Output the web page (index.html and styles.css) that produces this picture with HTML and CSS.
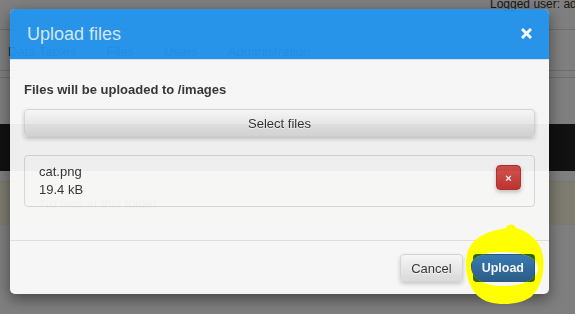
FILE: index.html
```html
<!DOCTYPE html>
<html lang="en">
<head>
    <meta charset="UTF-8">
    <title>Files - Upload</title>
    <link rel="stylesheet" href="styles.css">
</head>
<body>
    <div class="page">
        <div class="topbar"><span class="user">Logged user: admin</span></div>
        <nav class="tabs">
            <a class="tab first">Data Tables</a>
            <a class="tab">Files</a>
            <a class="tab">Users</a>
            <a class="tab">Administration</a>
        </nav>
        <div class="crumbs"></div>
        <div class="darkbar"></div>
        <div class="empty">No files in this folder</div>
    </div>

    <div class="backdrop"></div>

    <div class="modal">
        <div class="modal-header">
            <h4 class="modal-title">Upload files</h4>
            <span class="close">
                <svg width="11" height="11" viewBox="0 0 11 11"><path d="M2 2 L9 9 M9 2 L2 9" stroke="#fff" stroke-width="3" stroke-linecap="square"/></svg>
            </span>
        </div>
        <div class="modal-body">
            <div class="target">Files will be uploaded to /images</div>
            <button class="btn btn-select">Select files</button>
            <div class="file">
                <div class="file-info">
                    <div>cat.png</div>
                    <div>19.4 kB</div>
                </div>
                <button class="btn btn-danger">&times;</button>
            </div>
        </div>
        <div class="modal-footer">
            <button class="btn btn-default">Cancel</button>
            <button class="btn btn-primary">Upload</button>
        </div>
    </div>

    <!-- highlighter mark drawn over the screenshot -->
    <svg class="mark" width="100" height="90" viewBox="455 220 100 90">
        <defs>
            <clipPath id="btnArea"><rect x="473" y="254" width="62" height="28" rx="4"/></clipPath>
            <path id="ring" fill-rule="evenodd" d="M466 266 C465 250 472 239 487 233 C495 230 502 229 506 228 C507 224 514 223 516 228 C530 232 541 242 543 256 C545 272 541 288 531 297 C521 304 503 306 489 302 C475 298 467 285 466 266 Z M471 266 C471 256 486 252 503 252 C522 252 538 257 538 268 C538 280 522 286 503 286 C486 286 471 280 471 266 Z"/>
        </defs>
        <use href="#ring" fill="#ffff00"/>
        <use href="#ring" fill="#2f6409" clip-path="url(#btnArea)"/>
    </svg>
</body>
</html>
```

FILE: styles.css
```css
body {
    margin: 0;
    font-family: "Liberation Sans", Arial, sans-serif;
    font-size: 13px;
    color: #333;
    background: #fff;
}

/* page behind the dialog */
.topbar { height: 29px; border-bottom: 1px solid #ddd; overflow: hidden; }
.user { display: block; margin: -3px 0 0 490px; font-size: 12px; line-height: 14px; white-space: nowrap; }
.tabs { display: flex; height: 41px; align-items: center; border-bottom: 1px solid #ddd; padding-top: 2px; box-sizing: border-box; }
.tab { padding: 0 15px; font-size: 13px; line-height: 39px; color: #444; }
.tab.first { padding-left: 8px; padding-right: 14px; border-right: 1px solid #ddd; }
.crumbs { margin-top: 6px; border-top: 1px solid #ddd; height: 46px; }
.darkbar { height: 47px; background: #222; }
.empty {
    margin-top: 10px;
    height: 43px;
    line-height: 43px;
    padding-left: 40px;
    background: #fcf8e3;
    border-top: 1px solid #faebcc;
    color: #8a6d3b;
    font-size: 13px;
}

.backdrop { position: fixed; inset: 0; background: rgba(0,0,0,0.5); }

/* dialog */
.modal {
    position: fixed;
    left: 10px;
    top: 9px;
    width: 539px;
    background: #fff;
    border-radius: 5px;
    overflow: hidden;
    opacity: 0.93;
    box-shadow: 0 5px 15px rgba(0,0,0,0.5);
}
.modal-header {
    display: flex;
    justify-content: space-between;
    align-items: center;
    padding: 15px 17px;
    background: #2196f3;
    border-bottom: 1px solid #e5e5e5;
}
.modal-title { margin: 0; font-size: 18px; font-weight: normal; line-height: 20px; color: rgba(255,255,255,0.85); }
.close { display: flex; margin-top: -2px; }
.modal-body { padding: 21px 14px 33px; }
.target { font-weight: bold; line-height: 18px; margin-bottom: 10px; }

.btn {
    font-family: inherit;
    font-size: 13px;
    height: 28px;
    padding: 0 10px;
    border-radius: 4px;
    border: 1px solid #ccc;
    cursor: pointer;
}
.btn-select, .btn-default {
    color: #333;
    background: linear-gradient(#fff, #e0e0e0);
    border-color: #dcdcdc;
    text-shadow: 0 1px 0 #fff;
    box-shadow: 0 2px 4px rgba(0,0,0,0.2);
}
.btn-select { display: block; width: 100%; margin-bottom: 18px; }
.btn-primary {
    color: #fff;
    font-weight: bold;
    font-size: 12.5px;
    background: linear-gradient(#337ab7, #265a88);
    border-color: #245580;
}
.btn-danger {
    width: 25px;
    height: 25px;
    padding: 0;
    margin-top: 2px;
    font-size: 11px;
    font-weight: bold;
    color: #fff;
    background: linear-gradient(#d9534f, #c12e2a);
    border-color: #b92c28;
    box-shadow: 0 2px 4px rgba(0,0,0,0.25);
}

.file {
    display: flex;
    justify-content: space-between;
    align-items: flex-start;
    padding: 7px 13px 7px 14px;
    border: 1px solid #ddd;
    border-radius: 4px;
}
.file-info { line-height: 18px; }

.modal-footer {
    display: flex;
    justify-content: flex-end;
    gap: 8px;
    padding: 13px 14px 12px;
    border-top: 1px solid #e5e5e5;
}

.mark { position: fixed; left: 455px; top: 220px; }
```
